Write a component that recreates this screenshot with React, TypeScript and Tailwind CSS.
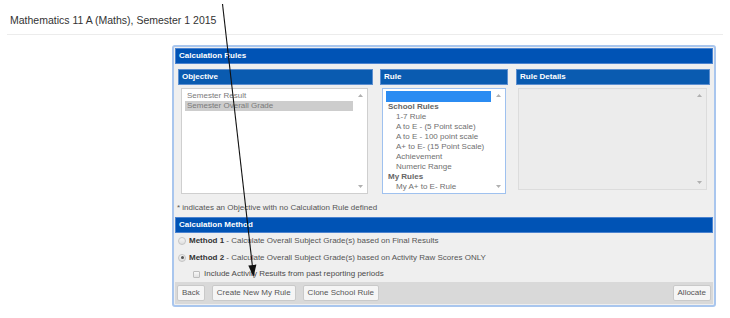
import React from "react";

const font = "font-['Liberation_Sans',Arial,sans-serif]";

function Arrow({ up }: { up?: boolean }) {
  return (
    <svg width="5" height="3" viewBox="0 0 5 3" className="block">
      <polygon points={up ? "0,3 5,3 2.5,0" : "0,0 5,0 2.5,3"} fill="#b0b0b0" />
    </svg>
  );
}

function ScrollTrack() {
  return (
    <div className="w-[14px] flex flex-col items-center justify-between py-[5px]">
      <Arrow up />
      <Arrow />
    </div>
  );
}

function SubHeader({ label }: { label: string }) {
  return (
    <div className="h-[16px] bg-[#0a5bb0] border border-[#5d8fd0] flex items-center pl-[3px] text-white text-[8px] font-bold">
      {label}
    </div>
  );
}

function Radio({ checked }: { checked?: boolean }) {
  return (
    <span className="w-[8px] h-[8px] rounded-full border border-[#c4c4c4] bg-gradient-to-b from-[#f6f6f6] to-[#dedede] flex items-center justify-center">
      {checked && <span className="w-[3px] h-[3px] rounded-full bg-[#555]" />}
    </span>
  );
}

function Button({ label }: { label: string }) {
  return (
    <button className="h-[16px] px-[4px] bg-[#f5f5f5] border border-[#c9c9c9] rounded-[2px] text-[8px] text-[#555] leading-none">
      {label}
    </button>
  );
}

const ruleGroups = [
  { group: "School Rules", items: ["1-7 Rule", "A to E - (5 Point scale)", "A to E - 100 point scale", "A+ to E- (15 Point Scale)", "Achievement", "Numeric Range"] },
  { group: "My Rules", items: ["My A+ to E- Rule"] },
];

export default function App() {
  return (
    <div className={`relative w-[730px] h-[318px] bg-white overflow-hidden ${font}`}>
      {/* Page title */}
      <div className="h-[34px] pt-[14px] pl-[10px] text-[10.5px] leading-[12px] text-[#333]">
        Mathematics 11 A (Maths), Semester 1 2015
      </div>
      <div className="mx-[7px] h-px bg-[#ececec]" />

      {/* Panel */}
      <div className="ml-[172px] mt-[10px] w-[544px] h-[262px] border-2 border-[#a9c6ee] rounded-[3px] bg-[#efefef] p-px flex flex-col">
        <div className="h-[16px] bg-[#0053b5] border border-[#4c83cf] flex items-center pl-[3px] text-white text-[8px] font-bold">
          Calculation Rules
        </div>

        <div className="mt-[5px] px-[3px] flex gap-[7px]">
          {/* Objective */}
          <div className="w-[195px]">
            <SubHeader label="Objective" />
            <div className="mt-[3px] ml-[3px] w-[187px] h-[106px] bg-white border border-[#cfcfcf] flex">
              <div className="flex-1 pt-[2px] pl-[3px] text-[8px] leading-[10px] text-[#7a7a7a]">
                <div className="pl-[2px]">Semester Result</div>
                <div className="pl-[2px] bg-[#cdcdcd]">Semester Overall Grade</div>
              </div>
              <ScrollTrack />
            </div>
          </div>

          {/* Rule */}
          <div className="w-[128px] mr-px">
            <SubHeader label="Rule" />
            <div className="mt-[3px] mx-[2px] h-[106px] bg-white border border-[#9fc1ef] flex">
              <div className="flex-1 pt-[2px] pl-[3px] text-[8px] leading-[10px] text-[#6f6f6f]">
                <div className="h-[11px] bg-[#2b8cf2]" />
                {ruleGroups.map((g) => (
                  <div key={g.group}>
                    <div className="pl-[2px] font-bold text-[#666]">{g.group}</div>
                    {g.items.map((item) => (
                      <div key={item} className="pl-[10px]">{item}</div>
                    ))}
                  </div>
                ))}
              </div>
              <ScrollTrack />
            </div>
          </div>

          {/* Rule Details */}
          <div className="w-[194px]">
            <SubHeader label="Rule Details" />
            <div className="mt-[3px] ml-[2px] w-[189px] h-[102px] bg-[#ececec] border border-[#dcdcdc] flex justify-end">
              <ScrollTrack />
            </div>
          </div>
        </div>

        <div className="mt-[8px] h-[12px] pl-[2px] flex items-center text-[8px] text-[#555]">
          * indicates an Objective with no Calculation Rule defined
        </div>

        <div className="mt-[3px] h-[16px] bg-[#0053b5] border border-[#4c83cf] flex items-center pl-[3px] text-white text-[8px] font-bold">
          Calculation Method
        </div>

        {/* Methods */}
        <div className="h-[17px] flex items-center pl-[3px] gap-[3px] text-[8px] text-[#555]">
          <Radio />
          <span>
            <span className="font-bold text-[#333]">Method 1</span> - Calculate Overall Subject Grade(s) based on Final Results
          </span>
        </div>
        <div className="h-[17px] flex items-center pl-[3px] gap-[3px] text-[8px] text-[#555]">
          <Radio checked />
          <span>
            <span className="font-bold text-[#333]">Method 2</span> - Calculate Overall Subject Grade(s) based on Activity Raw Scores ONLY
          </span>
        </div>
        <div className="h-[16px] flex items-center pl-[18px] gap-[4px] text-[8px] text-[#4a4a4a]">
          <span className="w-[7px] h-[7px] border border-[#bdbdbd] rounded-[1px] bg-gradient-to-b from-[#f8f8f8] to-[#e2e2e2]" />
          <span>Include Activity Results from past reporting periods</span>
        </div>

        {/* Button bar */}
        <div className="h-[22px] bg-[#d9d9d9] flex items-center px-[2px]">
          <div className="flex gap-[7px]">
            <Button label="Back" />
            <Button label="Create New My Rule" />
            <Button label="Clone School Rule" />
          </div>
          <div className="ml-auto flex">
            <Button label="Allocate" />
          </div>
        </div>
      </div>

      {/* Annotation arrow */}
      <svg className="absolute left-0 top-0 pointer-events-none" width="730" height="318" viewBox="0 0 730 318">
        <line x1="222.5" y1="4" x2="252.4" y2="266" stroke="#111" strokeWidth="1.1" />
        <polygon points="253.5,277 256.4,264.6 248.3,265.5" fill="#111" />
      </svg>
    </div>
  );
}
